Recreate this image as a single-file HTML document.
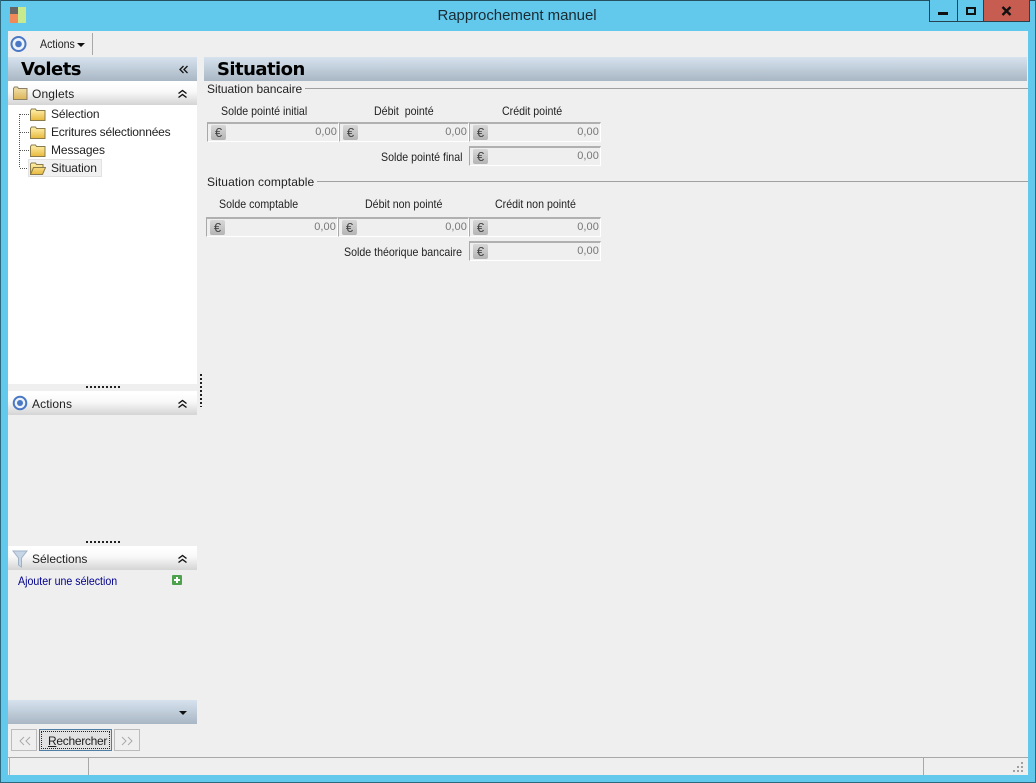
<!DOCTYPE html>
<html><head><meta charset="utf-8"><style>
html,body{margin:0;padding:0}
body{width:1036px;height:783px;overflow:hidden;position:relative;background:#63c9ec;font-family:"Liberation Sans",sans-serif;font-size:12px;color:#222}
div,span,svg{position:absolute;white-space:nowrap;box-sizing:border-box}
.b{height:24px;background:linear-gradient(#d6e3ef,#a9b6c3)}
.h{left:8px;width:189px;height:24px;background:linear-gradient(#fff 10%,#f8f8f8 45%,#d4d4d4)}
.t{font-size:12px;line-height:14px;letter-spacing:-.1px}
.l{font-size:12px;line-height:14px;transform:scaleX(.885);transform-origin:0 0}
.f{height:20px;background:#efefef;border-top:2px solid #b0b0b0;border-left:1px solid #a8a8a8;border-bottom:1px solid #fff;border-right:1px solid #fff}
.e{left:3px;top:1px;width:15px;height:15px;background:linear-gradient(#d8d8d8,#b4b4b4);border-radius:2px;color:#444;font-size:13px;line-height:15px;text-align:center}
.v{right:1px;top:1px;line-height:14px;color:#777;font-size:11px;letter-spacing:.1px}
.g{font:bold 18px/22px "DejaVu Sans",sans-serif;color:#000;letter-spacing:-.55px}
</style></head><body>
<div style="left:0;top:0;width:1036px;height:1px;background:#24505f"></div>
<div style="left:0;top:0;width:1px;height:783px;background:#2c6a80"></div>
<div style="left:1035px;top:0;width:1px;height:783px;background:#2c6a80"></div>
<div style="left:0;top:782px;width:1036px;height:1px;background:#2c6a80"></div>
<!-- title icon -->
<div style="left:10px;top:7px;width:8px;height:7px;background:#666"></div>
<div style="left:10px;top:14px;width:8px;height:9px;background:#f08a5a"></div>
<div style="left:18px;top:7px;width:8px;height:16px;background:#c8ea8e"></div>
<div style="left:-1px;top:7px;width:1036px;text-align:center;font-size:15px;line-height:18px;letter-spacing:-.05px;color:#1a2a33">Rapprochement manuel</div>
<!-- window buttons -->
<div style="left:929px;top:0;width:101px;height:22px;background:#63c9ec;border:1px solid #26424e;border-top:0"></div>
<div style="left:957px;top:0;width:1px;height:22px;background:#26424e"></div>
<div style="left:983px;top:0;width:47px;height:22px;background:#c75c50;border:1px solid #26424e;border-top:0"></div>
<div style="left:938px;top:12px;width:10px;height:3px;background:#111"></div>
<div style="left:966px;top:7px;width:10px;height:8px;border:2px solid #111"></div>
<svg style="left:1001px;top:6px" width="11" height="10"><path d="M1.500 1l8 8M9.500 1l-8 8" stroke="#111" stroke-width="2.400" fill="none"/></svg>
<!-- client -->
<div style="left:8px;top:31px;width:1020px;height:744px;background:#efefef"></div>
<!-- toolbar -->
<svg style="left:10px;top:35px" width="18" height="18"><circle cx="8.500" cy="9" r="7" fill="#eef3fa" stroke="#4a78c4" stroke-width="2"/><circle cx="8.500" cy="9" r="3.300" fill="#4a78c4"/></svg>
<div class="l" style="left:40px;top:37px">Actions</div>
<div style="left:77px;top:43px;border:4px solid transparent;border-top:4px solid #111;border-bottom:0"></div>
<div style="left:92px;top:33px;width:1px;height:22px;background:#a8a8a8"></div>
<!-- Volets -->
<div class="b" style="left:8px;top:57px;width:189px"></div>
<div class="g" style="left:21px;top:59px;letter-spacing:-.5px">Volets</div>
<svg style="left:179px;top:65px" width="10" height="10"><path d="M4.500 1L1 4.500 4.500 8M8.500 1L5 4.500 8.500 8" fill="none" stroke="#111" stroke-width="1.300"/></svg>
<!-- Situation header -->
<div class="b" style="left:204px;top:57px;width:823px"></div>
<div class="g" style="left:217px;top:59px">Situation</div>
<!-- Left white -->
<div style="left:8px;top:105px;width:189px;height:279px;background:#fff"></div>
<div class="h" style="top:81px"></div>
<svg style="left:13px;top:86px" width="15" height="14"><defs><linearGradient id="a" x1="0" y1="0" x2="0" y2="1"><stop offset="0" stop-color="#fff2b0"/><stop offset="1" stop-color="#e8b83c"/></linearGradient><linearGradient id="o" x1="0" y1="0" x2="0" y2="1"><stop offset="0" stop-color="#f2e2b0"/><stop offset="1" stop-color="#dcb458"/></linearGradient></defs><path d="M.5 2.500l1-1.500h3l1 1.500h8.500v11H.5z" fill="url(#o)" stroke="#8b8064"/></svg>
<div class="t" style="left:32px;top:87px;letter-spacing:.15px">Onglets</div>
<svg style="left:177px;top:88px" width="11" height="11"><path d="M1.500 5.500l4-3 4 3M1.500 9.500l4-3 4 3" fill="none" stroke="#111" stroke-width="1.400"/></svg>
<!-- tree -->
<svg style="left:18px;top:110px" width="14" height="62" shape-rendering="crispEdges"><path d="M1.500 4V58M2 4.500H13M2 22.500H13M2 40.500H13M2 58.500H13" fill="none" stroke="#555" stroke-width="1" stroke-dasharray="1 1"/></svg>
<div style="left:28px;top:159px;width:74px;height:18px;background:#f1f1f1;border:1px solid #e2e2e2"></div>
<svg style="left:30px;top:108px" width="16" height="13"><path d="M.5 2.500l1-1.500h4l1 1.500h8.500v10H.5z" fill="url(#a)" stroke="#8a7c4a"/></svg>
<svg style="left:30px;top:126px" width="16" height="13"><path d="M.5 2.500l1-1.500h4l1 1.500h8.500v10H.5z" fill="url(#a)" stroke="#8a7c4a"/></svg>
<svg style="left:30px;top:144px" width="16" height="13"><path d="M.5 2.500l1-1.500h4l1 1.500h8.500v10H.5z" fill="url(#a)" stroke="#8a7c4a"/></svg>
<svg style="left:30px;top:162px" width="16" height="13"><path d="M.5 12.500V2l1-1h4l1 1.500h6.500v2.500M.5 12.500l3-7h12l-3 7z" fill="url(#a)" stroke="#8a7c4a"/></svg>
<div class="t" style="left:51px;top:107px">Sélection</div>
<div class="t" style="left:51px;top:125px;letter-spacing:-.2px">Ecritures sélectionnées</div>
<div class="t" style="left:51px;top:143px">Messages</div>
<div class="t" style="left:51px;top:161px">Situation</div>
<!-- splitters -->
<div style="left:86px;top:386px;width:34px;height:2px;background:repeating-linear-gradient(90deg,#222 0 2px,transparent 2px 4px)"></div>
<div style="left:200px;top:374px;width:2px;height:33px;background:repeating-linear-gradient(#222 0 2px,transparent 2px 4px)"></div>
<div style="left:86px;top:541px;width:34px;height:2px;background:repeating-linear-gradient(90deg,#222 0 2px,transparent 2px 4px)"></div>
<!-- Actions -->
<div class="h" style="top:391px"></div>
<svg style="left:12px;top:394px" width="18" height="18"><circle cx="8" cy="9" r="6.300" fill="#eef3fa" stroke="#4a78c4" stroke-width="2"/><circle cx="8" cy="9" r="3" fill="#4a78c4"/></svg>
<div class="t" style="left:32px;top:397px;letter-spacing:.1px">Actions</div>
<svg style="left:177px;top:398px" width="11" height="11"><path d="M1.500 5.500l4-3 4 3M1.500 9.500l4-3 4 3" fill="none" stroke="#111" stroke-width="1.400"/></svg>
<!-- Selections -->
<div class="h" style="top:546px"></div>
<svg style="left:12px;top:550px" width="16" height="18"><path d="M1 1h14l-5.500 7v9l-3-2V8z" fill="#c6d6e6" stroke="#9fb2c4"/></svg>
<div class="t" style="left:32px;top:552px;letter-spacing:0">Sélections</div>
<svg style="left:177px;top:553px" width="11" height="11"><path d="M1.500 5.500l4-3 4 3M1.500 9.500l4-3 4 3" fill="none" stroke="#111" stroke-width="1.400"/></svg>
<div class="l" style="left:18px;top:574px;color:#00008c">Ajouter une sélection</div>
<div style="left:172px;top:575px;width:10px;height:10px;background:#4ea24e;border-radius:1px"></div>
<div style="left:174px;top:579px;width:6px;height:2px;background:#fff"></div>
<div style="left:176px;top:577px;width:2px;height:6px;background:#fff"></div>
<!-- bottom left -->
<div class="b" style="left:8px;top:700px;width:189px"></div>
<div style="left:179px;top:711px;border:4.500px solid transparent;border-top:4.500px solid #111;border-bottom:0"></div>
<div style="left:11px;top:729px;width:26px;height:22px;background:#efefef;border:1px solid #bcbcbc"></div>
<svg style="left:19px;top:736px" width="12" height="10"><path d="M5 1L1 5l4 4M11 1L7 5l4 4" fill="none" stroke="#aaa"/></svg>
<div style="left:39px;top:729px;width:73px;height:22px;background:#e2e2e2;border:1px solid #4f7ea6;outline:1px dotted #222;outline-offset:-3px"></div>
<div class="t" style="left:48px;top:734px;letter-spacing:-.3px"><u>R</u>echercher</div>
<div style="left:114px;top:729px;width:26px;height:22px;background:#efefef;border:1px solid #bcbcbc"></div>
<svg style="left:121px;top:736px" width="12" height="10"><path d="M1 1l4 4-4 4M7 1l4 4-4 4" fill="none" stroke="#aaa"/></svg>
<!-- section 1 -->
<div class="t" style="left:207px;top:82px;background:#efefef;padding-right:3px;z-index:2;letter-spacing:-.05px">Situation bancaire</div>
<div style="left:207px;top:88px;width:821px;height:1px;background:#a0a0a0"></div>
<div class="l" style="left:221px;top:104px">Solde pointé initial</div>
<div class="l" style="left:374px;top:104px">Débit&nbsp; pointé</div>
<div class="l" style="left:502px;top:104px">Crédit pointé</div>
<div class="f" style="left:207px;top:122px;width:132px"><div class="e">€</div><div class="v">0,00</div></div>
<div class="f" style="left:339px;top:122px;width:130px"><div class="e">€</div><div class="v">0,00</div></div>
<div class="f" style="left:469px;top:122px;width:132px"><div class="e">€</div><div class="v">0,00</div></div>
<div class="l" style="left:381px;top:150px">Solde pointé final</div>
<div class="f" style="left:469px;top:146px;width:132px"><div class="e">€</div><div class="v">0,00</div></div>
<!-- section 2 -->
<div class="t" style="left:207px;top:175px;background:#efefef;padding-right:3px;z-index:2;letter-spacing:.1px">Situation comptable</div>
<div style="left:207px;top:181px;width:821px;height:1px;background:#a0a0a0"></div>
<div class="l" style="left:219px;top:197px">Solde comptable</div>
<div class="l" style="left:365px;top:197px">Débit non pointé</div>
<div class="l" style="left:495px;top:197px">Crédit non pointé</div>
<div class="f" style="left:206px;top:217px;width:132px"><div class="e">€</div><div class="v">0,00</div></div>
<div class="f" style="left:338px;top:217px;width:131px"><div class="e">€</div><div class="v">0,00</div></div>
<div class="f" style="left:469px;top:217px;width:132px"><div class="e">€</div><div class="v">0,00</div></div>
<div class="l" style="left:344px;top:245px">Solde théorique bancaire</div>
<div class="f" style="left:469px;top:241px;width:132px"><div class="e">€</div><div class="v">0,00</div></div>
<!-- status bar -->
<div style="left:8px;top:757px;width:1020px;height:1px;background:#a8a8a8"></div>
<div style="left:9px;top:757px;width:1px;height:18px;background:#b0b0b0"></div>
<div style="left:88px;top:757px;width:1px;height:18px;background:#a8a8a8"></div>
<div style="left:923px;top:757px;width:1px;height:18px;background:#a8a8a8"></div>
<svg style="left:1012px;top:762px" width="14" height="12" fill="#a0a0a0"><rect x="9" y="0" width="2" height="2"/><rect x="5" y="4" width="2" height="2"/><rect x="9" y="4" width="2" height="2"/><rect x="1" y="8" width="2" height="2"/><rect x="5" y="8" width="2" height="2"/><rect x="9" y="8" width="2" height="2"/></svg>
</body></html>
